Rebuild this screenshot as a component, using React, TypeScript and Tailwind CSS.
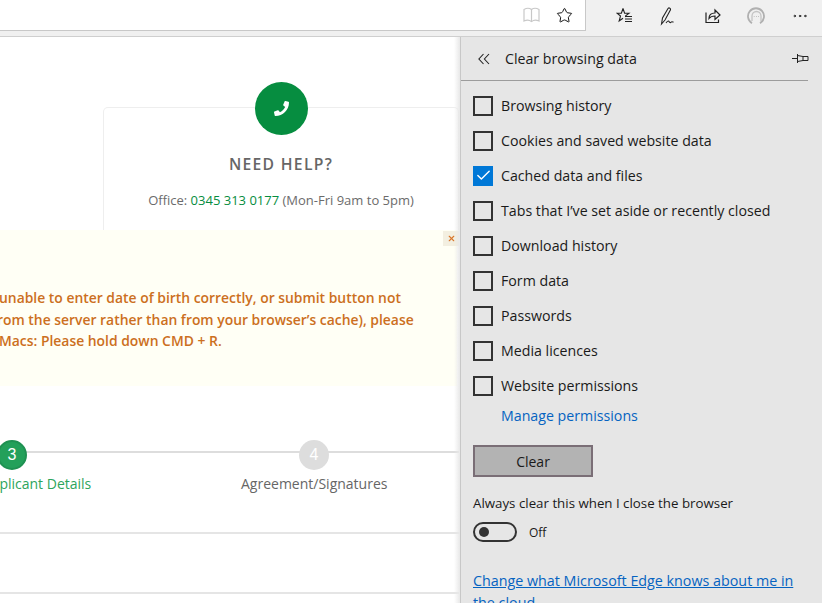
import { Star, X, Check, MoreHorizontal } from "lucide-react";
import { FaPhone } from "react-icons/fa";

const items = [
  "Browsing history",
  "Cookies and saved website data",
  "Cached data and files",
  "Tabs that I’ve set aside or recently closed",
  "Download history",
  "Form data",
  "Passwords",
  "Media licences",
  "Website permissions",
];

function Book() {
  return (
    <svg width="17" height="16" viewBox="0 0 17 16" fill="none" stroke="#c8c8c8" strokeWidth="1.2">
      <path d="M1 2.500C3.500 1 6.500 1 8.500 2.500 10.500 1 13.500 1 16 2.500V14c-2.500-1-5.500-1-7.500.6C6.500 13 3.500 13 1 14Z" />
      <path d="M8.500 2.500v12" />
    </svg>
  );
}
function Favorites() {
  return (
    <svg width="18" height="18" viewBox="0 0 18 18" fill="none" stroke="#222" strokeWidth="1.1">
      <path d="M7 1.500 8.600 6.200H13L9.600 8.900 10 10M7 1.500 5.400 6.200H1L4.500 9 3.200 14 7 11.200" />
      <path d="M9 9.500h7M9 12h7M9 14.500h7" />
    </svg>
  );
}
function Pen() {
  return (
    <svg width="20" height="20" viewBox="0 0 20 20" fill="none" stroke="#222" strokeWidth="1.1">
      <path d="M2.500 18 3.500 12 9 2.500c1-1.200 3-.2 2.500 1.300L6 14Z" />
      <path d="M7 17c1.500-2 2.500-2.500 3-1.500s1.500 1.500 2 .8 1.500-.8 2.500 0" />
    </svg>
  );
}
function Share() {
  return (
    <svg width="18" height="18" viewBox="0 0 18 18" fill="none" stroke="#222" strokeWidth="1.200">
      <path d="M2 5.500v10h12.500v-3" />
      <path d="M5 11.500c0-4 2.500-5.500 6-5.500V3l5 5-5 4.500V9c-3 0-4.500.5-6 2.500Z" />
    </svg>
  );
}
function Feedback() {
  return (
    <svg width="20" height="20" viewBox="0 0 20 20" fill="none">
      <path d="M6 17.200a8 8 0 1 1 8 0" stroke="#b0b0b0" strokeWidth="1.800" />
      <path d="M6 15V10a4.500 4.500 0 0 1 9 0v5" stroke="#c4c4c4" strokeWidth="1.300" />
      <path d="M7.800 10.500h.7M10 10.500h.7M12.200 10.500h.7" stroke="#b0b0b0" strokeWidth="1.200" />
    </svg>
  );
}
function Pin() {
  return (
    <svg width="17" height="11" viewBox="0 0 17 11" fill="none" stroke="#222" strokeWidth="1">
      <path d="M0 5.500h5M5.500 1v9M5.500 2.500 11 3.500h5v4h-5l-5.500 1M11 3.500v4" />
    </svg>
  );
}
function Chevrons() {
  return (
    <svg width="12" height="12" viewBox="0 0 12 12" fill="none" stroke="#222" strokeWidth="1.100">
      <path d="M5.500 1 .9 6l4.600 5M11 1 6.400 6l4.600 5" />
    </svg>
  );
}

export default function App() {
  return (
    <div className="w-[822px] h-[603px] overflow-hidden flex flex-col bg-white font-['Open_Sans','Noto_Sans',sans-serif]">
      <div className="h-[37px] shrink-0 flex items-start bg-[#f0f0f0] border-b border-[#cfcfcf]">
        <div className="w-[586px] h-[31px] bg-white border-r border-b border-[#c8c8c8] flex items-center justify-end pr-[12px] gap-[16px]">
          <Book />
          <Star size={17} strokeWidth={1.4} className="text-[#111]" />
        </div>
        <div className="flex-1 h-[31px] flex items-center pl-[30px] pr-[13px] justify-between">
          <Favorites />
          <Pen />
          <Share />
          <Feedback />
          <MoreHorizontal size={18} strokeWidth={1.3} className="text-[#222]" />
        </div>
      </div>

      <div className="flex-1 flex min-h-0">
        <div className="w-[460px] shrink-0 relative overflow-hidden flex flex-col bg-white">
          <div className="absolute right-0 top-0 bottom-0 w-[6px] bg-gradient-to-r from-transparent to-[#e8e8e8] z-10" />
          <div className="pt-[70px] pl-[103px] pr-[1px] shrink-0">
            <div className="h-[123px] border border-b-0 border-[#eeeeee] rounded-t-[5px] flex flex-col items-center">
              <div className="w-[53px] h-[53px] -mt-[26px] rounded-full bg-[#068d40] flex items-center justify-center">
                <FaPhone size={15} className="text-white" />
              </div>
              <div className="mt-[19px] text-[15.700px] leading-[20px] font-semibold tracking-[1.300px] text-[#666666]">
                NEED HELP?
              </div>
              <div className="mt-[17px] text-[13px] leading-[18px] text-[#6b6b6b] whitespace-nowrap">
                Office: <span className="text-[#068d40]">0345 313 0177</span> (Mon-Fri 9am to 5pm)
              </div>
            </div>
          </div>

          <div className="h-[156px] shrink-0 bg-[#fffff5] relative mr-[3px] pt-[57px] text-[13.900px] leading-[21.500px] font-semibold text-[#cc6f21] whitespace-nowrap">
            <div className="absolute right-[-2px] top-[1px] w-[16px] h-[15px] bg-[#f3efe0] flex items-center justify-center">
              <X size={9} strokeWidth={3} className="text-[#d9772c]" />
            </div>
            <div className="-ml-[1px]">unable to enter date of birth correctly, or submit button not</div>
            <div className="-ml-[8px]">from the server rather than from your browser’s cache), please</div>
            <div className="-ml-[1px]">Macs: Please hold down CMD + R.</div>
          </div>

          <div className="h-[148px] shrink-0 pr-[1px] border-b-2 border-[#e5e5e5]">
            <div className="mt-[52px] relative">
              <div className="absolute left-0 right-0 top-[13px] h-[2px] bg-[#dddddd]" />
              <div className="relative flex pt-[2px]">
                <div className="w-[30px] h-[30px] -ml-[3px] rounded-full bg-[#23a05a] border-2 border-[#1f9152] text-white text-[16px] leading-[26px] text-center font-['Liberation_Sans',sans-serif]">
                  3
                </div>
                <div className="ml-[272px] w-[30px] h-[30px] rounded-full bg-[#dddddd] text-white text-[16px] leading-[30px] text-center font-['Liberation_Sans',sans-serif]">
                  4
                </div>
              </div>
              <div className="relative flex text-[14px] leading-[20px] mt-[4px] whitespace-nowrap">
                <div className="-ml-[18px] text-[#2da55c]">Applicant Details</div>
                <div className="absolute left-[241px] text-[#666666]">Agreement/Signatures</div>
              </div>
            </div>
          </div>
          <div className="h-[60px] shrink-0 mr-[1px] border-b-2 border-[#e5e5e5]" />
        </div>

        <div className="flex-1 min-w-0 bg-[#e6e6e6] border-l border-[#c8c8c8] text-[#1a1a1a] font-['Open_Sans',sans-serif]">
          <div className="h-[44px] mr-[14px] flex items-center border-b border-[#9c9c9c]">
            <span className="ml-[17px] flex"><Chevrons /></span>
            <span className="ml-[15px] text-[14.200px]">Clear browsing data</span>
            <span className="ml-auto -mr-[1px] flex"><Pin /></span>
          </div>
          <div className="pt-[7px] pl-[12px]">
            {items.map((t, i) => (
              <div key={t} className="h-[35px] flex items-center gap-[8px]">
                {i === 2 ? (
                  <div className="w-[20px] h-[20px] bg-[#0078d7] flex items-center justify-center">
                    <Check size={17} strokeWidth={2} className="text-white" />
                  </div>
                ) : (
                  <div className="w-[20px] h-[20px] border-2 border-[#333333]" />
                )}
                <span className="text-[14.200px] whitespace-nowrap">{t}</span>
              </div>
            ))}
            <div className="pl-[28px] mt-[3px] text-[14.200px] leading-[20px] text-[#0563c1]">Manage permissions</div>
            <div className="mt-[19px] w-[120px] h-[32px] bg-[#b3b3b3] border-2 border-[#7a6e76] flex items-center justify-center text-[14px]">
              Clear
            </div>
            <div className="mt-[17px] text-[13.300px] leading-[18px] whitespace-nowrap">Always clear this when I close the browser</div>
            <div className="mt-[10px] flex items-center gap-[12px]">
              <div className="w-[44px] h-[20px] rounded-full border-2 border-[#333333] flex items-center pl-[4px]">
                <div className="w-[10px] h-[10px] rounded-full bg-[#333333]" />
              </div>
              <span className="text-[12px] translate-y-[1px]">Off</span>
            </div>
            <div className="mt-[28px] text-[14.300px] leading-[22px] text-[#0563c1] underline w-[335px]">
              Change what Microsoft Edge knows about me in the cloud
            </div>
          </div>
        </div>
      </div>
    </div>
  );
}
